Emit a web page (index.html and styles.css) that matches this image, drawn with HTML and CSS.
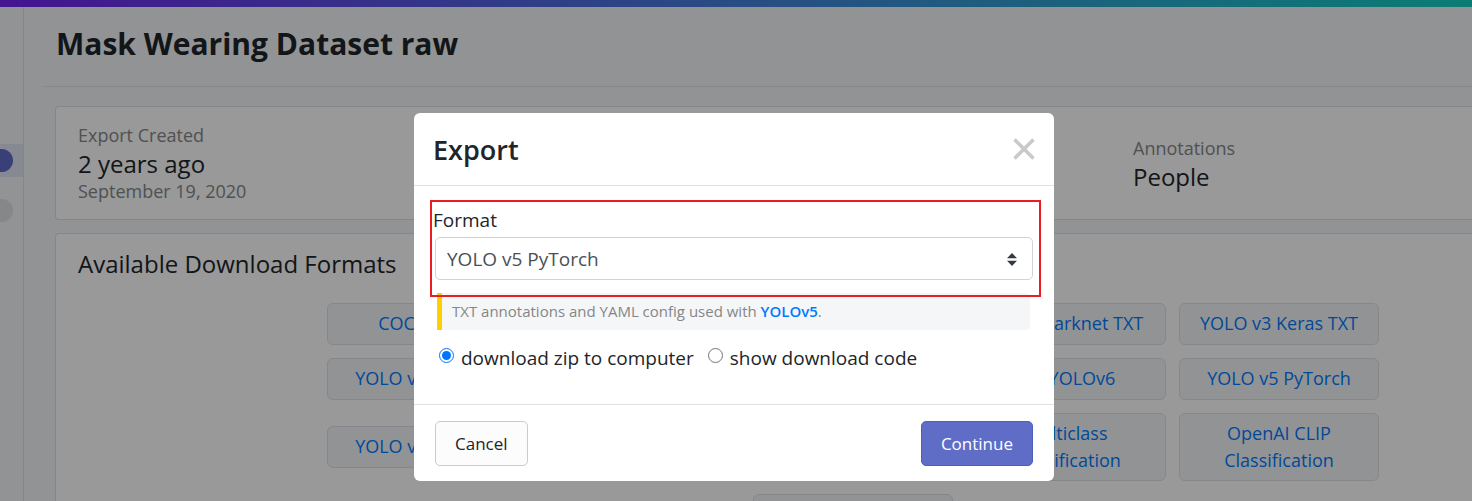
FILE: index.html
```html
<!DOCTYPE html>
<html lang="en">
<head>
<meta charset="utf-8">
<title>Mask Wearing Dataset raw</title>
<link rel="stylesheet" href="styles.css">
</head>
<body>
<div class="topbar"></div>
<div class="page">
  <nav class="sidebar" aria-label="Versions">
    <div class="version version-active"><span class="dot"></span></div>
    <div class="version"><span class="dot"></span></div>
  </nav>
  <main class="main">
    <header class="title-row"><h1 class="title">Mask Wearing Dataset raw</h1></header>
    <div class="cards">
      <section class="card summary">
        <div class="fact">
          <span class="muted">Export Created</span>
          <span class="value">2 years ago</span>
          <span class="muted">September 19, 2020</span>
        </div>
        <div class="fact">
          <span class="muted">Annotations</span>
          <span class="value">People</span>
        </div>
      </section>
      <section class="card formats">
        <h2 class="formats-title">Available Download Formats</h2>
        <div class="format-list">
          <a class="format" href="#">COCO JSON</a>
          <a class="format" href="#"></a>
          <a class="format" href="#"></a>
          <a class="format" href="#">YOLO Darknet TXT</a>
          <a class="format" href="#">YOLO v3 Keras TXT</a>
          <a class="format" href="#">YOLO v4 PyTorch</a>
          <a class="format" href="#"></a>
          <a class="format" href="#"></a>
          <a class="format" href="#">MT-YOLOv6</a>
          <a class="format" href="#">YOLO v5 PyTorch</a>
          <a class="format" href="#">YOLO v7 PyTorch</a>
          <a class="format" href="#"></a>
          <a class="format" href="#"></a>
          <a class="format" href="#">Multiclass Classification</a>
          <a class="format" href="#">OpenAI CLIP Classification</a>
          <a class="format" href="#"></a>
        </div>
      </section>
    </div>
  </main>
</div>
<div class="overlay">
  <form class="modal" role="dialog" aria-labelledby="modal-title">
    <header class="modal-header">
      <h2 class="modal-title" id="modal-title">Export</h2>
      <button class="close" type="button" aria-label="Close">
        <svg width="22" height="22" viewBox="0 0 22 22"><path d="M1.500 1.500 20.500 20.500M20.500 1.500 1.500 20.500" stroke="#c9c9c9" stroke-width="3.600" fill="none"/></svg>
      </button>
    </header>
    <div class="modal-body">
      <div class="field">
        <label class="field-label" for="format">Format</label>
        <div class="select-wrap">
          <select class="select" id="format"><option>YOLO v5 PyTorch</option></select>
          <svg class="select-icon" width="10" height="13" viewBox="0 0 10 13"><path d="M5 0 10 5.200H0ZM0 7.800H10L5 13Z" fill="#343a40"/></svg>
        </div>
      </div>
      <p class="note">TXT annotations and YAML config used with <a class="note-link" href="#">YOLOv5</a>.</p>
      <div class="choices">
        <label class="choice"><input class="radio" type="radio" name="method" checked>download zip to computer</label>
        <label class="choice"><input class="radio" type="radio" name="method">show download code</label>
      </div>
    </div>
    <footer class="modal-footer">
      <button class="button" type="button">Cancel</button>
      <button class="button button-primary" type="submit">Continue</button>
    </footer>
  </form>
</div>
</body>
</html>
```
FILE: styles.css
```css
* { box-sizing: border-box; }
body {
  margin: 0;
  height: 100vh;
  overflow: hidden;
  display: flex;
  flex-direction: column;
  background: #f4f6f9;
  color: #212529;
  font-family: "Open Sans", "Segoe UI", sans-serif;
  font-size: 18px;
  line-height: 27px;
}
h1, h2, p { margin: 0; }
.topbar { flex: none; height: 7px; background: linear-gradient(90deg, #7322f0, #4480dc 50%, #12d0c2); }
.page { flex: 1; display: flex; min-height: 0; }
.sidebar { width: 24px; border-right: 1px solid #dcdfe5; padding-top: 137px; overflow: hidden; }
.version { height: 33px; display: flex; align-items: center; margin-bottom: 17px; }
.version-active { background: #dfe4f3; }
.dot { flex: none; width: 23px; height: 23px; border-radius: 50%; background: #e0e1e3; margin-left: -10px; }
.version-active .dot { background: #5f6cc6; }
.main { flex: 1; padding-left: 19px; min-width: 0; overflow: hidden; }
.title-row { height: 80px; padding: 17px 0 0 13px; border-bottom: 1px solid #e0e3e7; }
.title { font-size: 30px; line-height: 40px; font-weight: 700; }
.cards { padding: 19px 0 0 12px; display: flex; flex-direction: column; gap: 13px; }
.card { background: #fff; border: 1px solid #dcdfe5; border-right: 0; border-radius: 4px 0 0 4px; padding-left: 22px; }
.summary { display: grid; grid-template-columns: 1055px 1fr; align-items: center; height: 114px; }
.fact { display: flex; flex-direction: column; }
.muted { color: #85878a; }
.value { font-size: 24px; line-height: 29px; }
.formats { padding-top: 14px; padding-bottom: 22px; }
.formats-title { font-size: 24px; line-height: 32px; font-weight: 400; }
.format-list { display: flex; flex-wrap: wrap; justify-content: center; align-items: center; gap: 13px; padding: 23px 0 0 156px; }
.format {
  width: 200px; min-height: 42px; padding: 6px 16px;
  border: 1px solid #dee1e6; border-radius: 6px; background: #f4f6f9;
  color: #007bff; text-align: center; text-decoration: none;
}
.overlay { position: fixed; inset: 0; background: rgba(0, 0, 0, .4); display: flex; justify-content: center; align-items: flex-start; padding: 113px 4px 0 0; }
.modal { width: 640px; background: #fff; border-radius: 6px; }
.modal-header { height: 73px; display: flex; align-items: center; justify-content: space-between; padding: 0 19px; border-bottom: 1px solid #dee2e6; }
.modal-title { font-size: 27px; line-height: 36px; font-weight: 600; padding-top: 2px; }
.close { border: 0; background: none; padding: 0; display: flex; }
.modal-body { padding: 20px 21px 32px; }
.field { position: relative; font-size: 19px; }
.field::after { content: ""; position: absolute; inset: -6px -8px -17px -5px; border: 2px solid #ed1c24; pointer-events: none; }
.field-label { display: block; line-height: 28px; padding-bottom: 3px; margin-left: -2px; }
.select-wrap { position: relative; }
.select {
  appearance: none; display: block; width: 100%; height: 43px; padding: 2px 11px 0;
  border: 1px solid #ced4da; border-radius: 5px; background: #fff;
  color: #495057; font: inherit;
}
.select-icon { position: absolute; right: 16px; top: 16px; pointer-events: none; }
.note { margin: 13px 3px 0 2px; border-left: 5px solid #ffd000; border-radius: 0 4px 4px 0; background: #f4f6f8; color: #868686; font-size: 15px; line-height: 37px; padding-left: 10px; }
.note-link { color: #007bff; font-weight: 600; text-decoration: none; }
.choices { display: flex; gap: 14px; padding: 15px 0 0 4px; font-size: 19px; }
.choice { display: flex; align-items: flex-start; }
.radio { width: 15px; height: 15px; margin: 3px 7px 0 0; accent-color: #0075ff; }
.modal-footer { display: flex; justify-content: space-between; padding: 16px 21px 15px; border-top: 1px solid #dee2e6; }
.button { height: 45px; padding: 0 19px; border: 1px solid #c5ccd6; border-radius: 5px; background: #fcfcfd; color: #212529; font: inherit; font-size: 17px; }
.button-primary { background: #5f6dc6; border-color: #505eb9; color: #fff; }
```
